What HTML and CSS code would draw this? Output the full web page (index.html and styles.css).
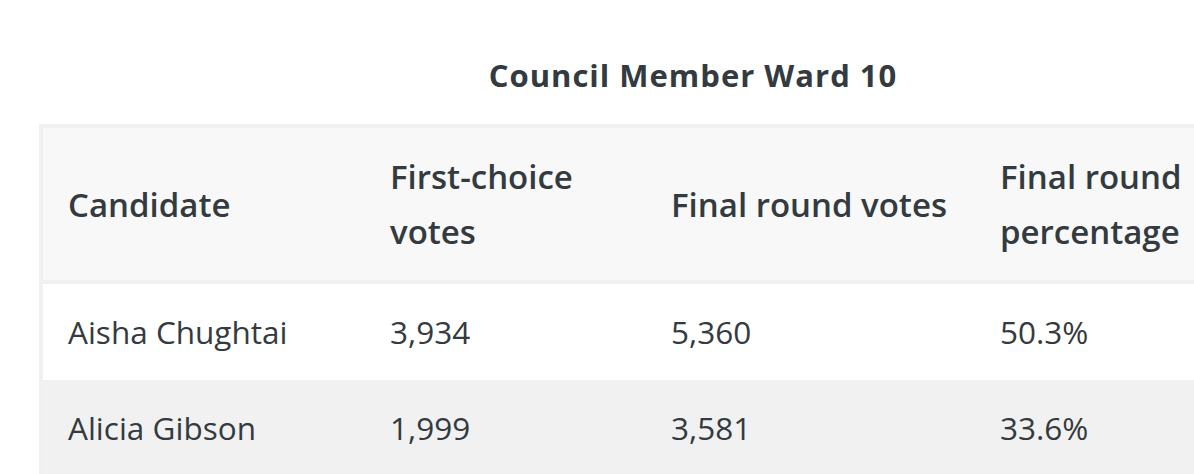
FILE: index.html
```html
<!DOCTYPE html>
<html lang="en">
<head>
<meta charset="utf-8">
<title>Council Member Ward 10</title>
<link rel="stylesheet" href="styles.css">
</head>
<body>
<div class="wrap">
  <h2 class="title">Council Member Ward 10</h2>
  <table class="results">
    <thead>
      <tr>
        <th class="c1">Candidate</th>
        <th class="c2">First-choice votes</th>
        <th class="c3">Final round votes</th>
        <th class="c4">Final round percentage</th>
      </tr>
    </thead>
    <tbody>
      <tr>
        <td>Aisha Chughtai</td>
        <td>3,934</td>
        <td>5,360</td>
        <td>50.3%</td>
      </tr>
      <tr class="alt">
        <td>Alicia Gibson</td>
        <td>1,999</td>
        <td>3,581</td>
        <td>33.6%</td>
      </tr>
    </tbody>
  </table>
</div>
</body>
</html>
```

FILE: styles.css
```css
html, body {
  margin: 0;
  padding: 0;
  background: #ffffff;
  overflow: hidden;
}

body {
  font-family: "Open Sans", "Noto Sans", sans-serif;
  color: #333b40;
}

.wrap {
  margin-left: 39px;
  width: 1308px;
}

.title {
  margin: 0 0 26px;
  padding-top: 52px;
  font-size: 31px;
  letter-spacing: 1px;
  line-height: 46px;
  font-weight: 700;
  text-align: center;
}

.results {
  border-collapse: collapse;
  border: 4px solid #f0f0f0;
  width: 1159px;
  table-layout: fixed;
}

.results th,
.results td {
  text-align: left;
  vertical-align: middle;
  padding: 21px 25px;
}

.results th {
  font-size: 33px;
  font-weight: 600;
  line-height: 55px;
  background: #f8f8f8;
  border-bottom: 4px solid #f0f0f0;
}

.results td {
  font-size: 31.5px;
  font-weight: 400;
  line-height: 54px;
  height: 54px;
}

.results .alt td {
  background: #f1f1f1;
}

.c1 { width: 272px; }
.c2 { width: 231px; }
.c3 { width: 279px; white-space: nowrap; }
.c4 { width: 215px; }
```
